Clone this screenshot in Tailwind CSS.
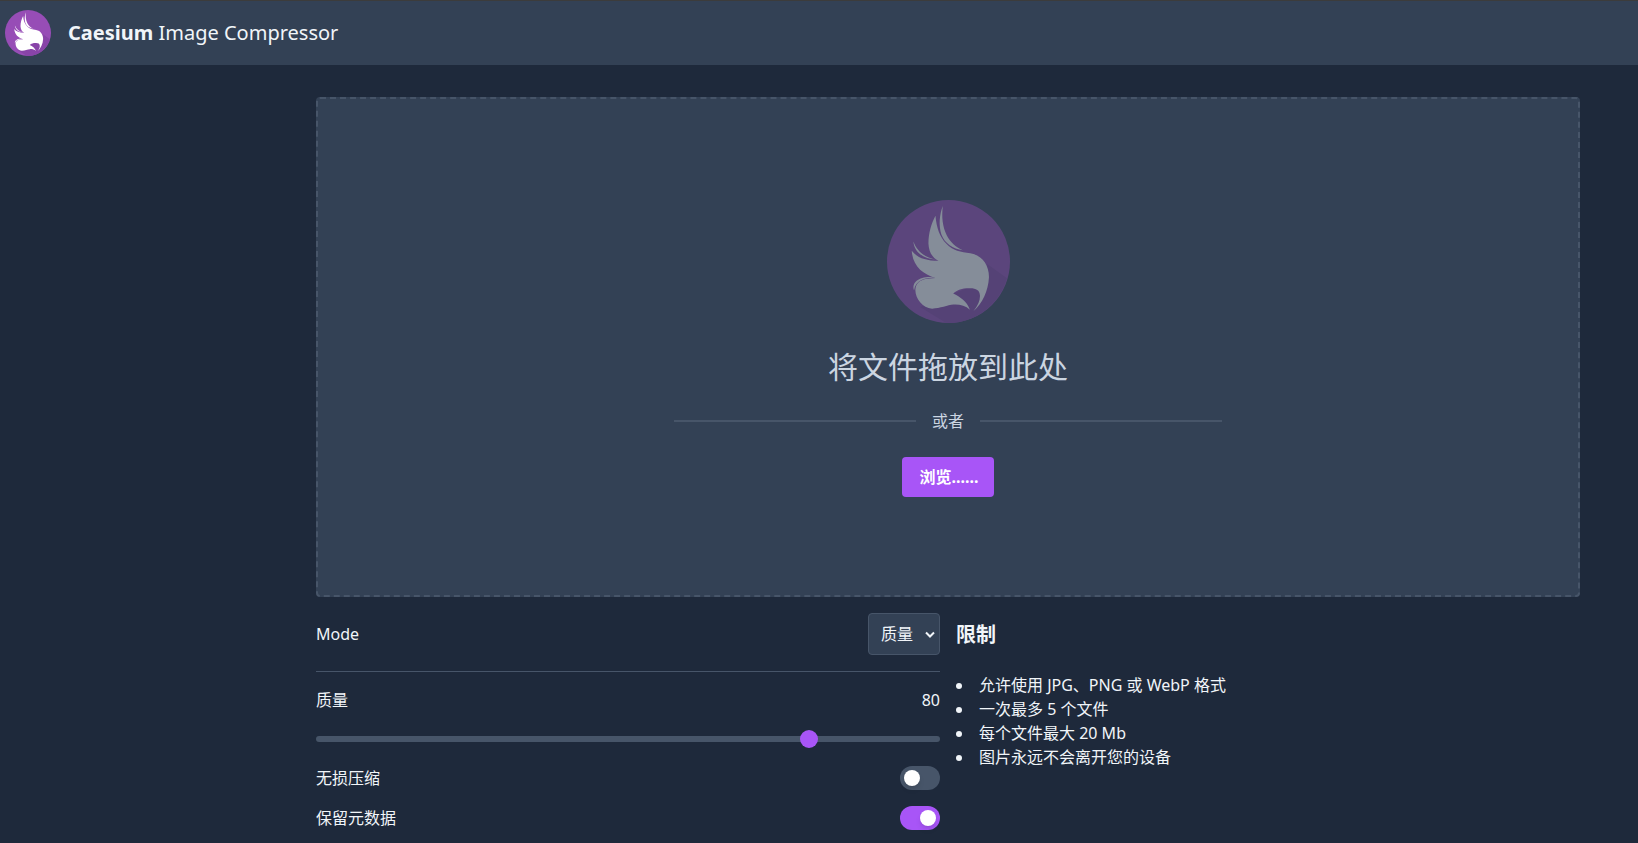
<!DOCTYPE html>
<html lang="zh-CN">
<head>
<meta charset="utf-8">
<meta name="viewport" content="width=device-width, initial-scale=1">
<title>Caesium Image Compressor</title>
<script src="https://cdn.jsdelivr.net/npm/@tailwindcss/browser@4"></script>
</head>
<body class="min-h-screen overflow-x-hidden bg-[#1e293b] font-['Noto_Sans','Noto_Sans_CJK_SC',sans-serif] text-base text-[#f1f5f9]">
<svg class="hidden" aria-hidden="true">
  <symbol id="logo" viewBox="51 30 368 368">
    <circle cx="235" cy="214" r="184" fill="#974db6"/>
    <path fill="#8844a8" d="M352 222 L410 264 C388 340 318 398 235 398 L228 398 L150 350 L300 290Z"/>
    <path fill="#fff" d="M196 77 C199 112 209 141 228 160 C248 182 272 186 300 189 C336 195 357 226 356 262 C354 302 336 340 310 362 C324 345 330 330 329 315 C328 300 318 294 300 294 C280 293 262 297 249 310 C270 320 290 334 299 358 C286 346 268 342 250 343 C232 344 210 355 186 355 C156 354 134 322 136 297 C138 276 155 266 180 265 L196 263 C158 252 128 228 125 182 C140 202 165 212 205 212 C186 203 176 184 175 160 C175 128 184 100 196 77Z"/>
    <path fill="#fff" d="M218 48 C214 80 217 110 230 136 C241 157 256 170 278 180 C248 176 224 160 214 134 C205 106 208 74 218 48Z"/>
    <path fill="#fff" d="M130 154 C140 182 164 203 198 208 C162 208 132 186 130 154Z"/>
    <path fill="#fff" d="M200 262 C165 262 136 270 132 300 C122 272 155 254 200 262Z"/>
  </symbol>
</svg>
<header class="flex h-[65px] items-center gap-4 border-t border-[#3c3c3c] bg-[#334155] pl-1">
  <svg class="size-12 shrink-0" role="img" aria-label="Caesium"><use href="#logo" x="1" y="1" width="46" height="46"/></svg>
  <h1 class="text-xl"><b>Caesium</b> Image Compressor</h1>
</header>
<div class="flex gap-4 pt-8 pr-[58px]">
  <aside class="w-[300px] shrink-0"></aside>
  <main class="flex min-w-0 flex-1 flex-col gap-4">
    <section class="flex min-h-[500px] flex-col items-center justify-center rounded border-2 border-dashed border-[#475569] bg-[#334155] pt-0.5 text-[#cbd5e1]">
      <svg class="mb-[26px] size-[123px] opacity-40" aria-hidden="true"><use href="#logo"/></svg>
      <p class="mb-6 text-3xl">将文件拖放到此处</p>
      <div class="mb-6 flex w-[548px] max-w-full items-center gap-4">
        <span class="h-0.5 flex-1 bg-[#475569]"></span>
        <span>或者</span>
        <span class="h-0.5 flex-1 bg-[#475569]"></span>
      </div>
      <button type="button" class="h-10 rounded bg-[#a855f7] pr-4 pl-[18px] font-bold text-white">浏览......</button>
    </section>
    <div class="grid grid-cols-2 gap-4">
      <form class="flex flex-col">
        <div class="flex items-center justify-between border-b border-[#475569] pb-4">
          <label for="mode">Mode</label>
          <div class="relative">
            <select id="mode" class="h-[42px] w-[72px] appearance-none rounded border border-[#475569] bg-[#334155] pl-3"><option>质量</option></select>
            <svg class="pointer-events-none absolute top-4 right-1 size-3" viewBox="0 0 12 12" fill="none" stroke="currentColor" stroke-width="2"><path d="M2 3.5 6 7.5 10 3.5"/></svg>
          </div>
        </div>
        <div class="flex items-center justify-between pt-4">
          <label for="quality">质量</label>
          <output for="quality">80</output>
        </div>
        <input id="quality" type="range" min="1" max="100" value="80" class="mt-6 h-1.5 w-full appearance-none rounded-full bg-[#475569] [&::-webkit-slider-thumb]:size-[18px] [&::-webkit-slider-thumb]:appearance-none [&::-webkit-slider-thumb]:rounded-full [&::-webkit-slider-thumb]:bg-[#a855f7]">
        <div class="mt-6 flex h-6 items-center justify-between">
          <label for="lossless">无损压缩</label>
          <input id="lossless" type="checkbox" role="switch" class="flex h-6 w-10 appearance-none items-center rounded-full bg-[#475569] px-1 before:size-4 before:rounded-full before:bg-white before:shadow-md checked:bg-[#a855f7] checked:before:translate-x-4">
        </div>
        <div class="mt-4 flex h-6 items-center justify-between">
          <label for="metadata">保留元数据</label>
          <input id="metadata" type="checkbox" role="switch" checked class="flex h-6 w-10 appearance-none items-center rounded-full bg-[#475569] px-1 before:size-4 before:rounded-full before:bg-white before:shadow-md checked:bg-[#a855f7] checked:before:translate-x-4">
        </div>
      </form>
      <section class="pt-2">
        <h2 class="mb-6 text-xl font-bold">限制</h2>
        <ul class="list-inside list-disc">
          <li>允许使用 JPG、PNG 或 WebP 格式</li>
          <li>一次最多 5 个文件</li>
          <li>每个文件最大 20 Mb</li>
          <li>图片永远不会离开您的设备</li>
        </ul>
      </section>
    </div>
  </main>
</div>
</body>
</html>
